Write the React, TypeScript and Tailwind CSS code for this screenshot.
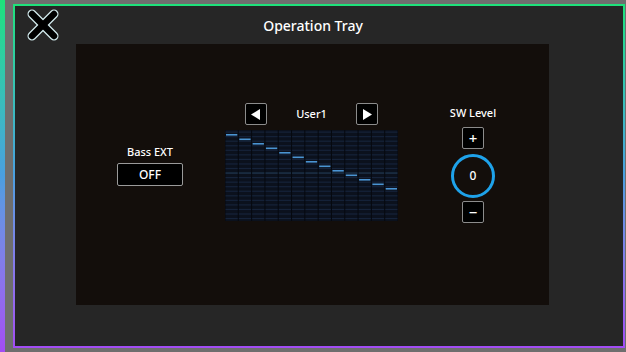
const ROWS = 20
const COLS = 13

function CloseIcon() {
	return (
		<svg width="32" height="32" viewBox="0 0 32 32">
			<line x1="5" y1="5" x2="27" y2="27" stroke="#d4ecef" strokeWidth="9" strokeLinecap="round" />
			<line x1="27" y1="5" x2="5" y2="27" stroke="#d4ecef" strokeWidth="9" strokeLinecap="round" />
			<line x1="5" y1="5" x2="27" y2="27" stroke="#000" strokeWidth="6.5" strokeLinecap="round" />
			<line x1="27" y1="5" x2="5" y2="27" stroke="#000" strokeWidth="6.5" strokeLinecap="round" />
		</svg>
	)
}

function EqGraph() {
	const w = 173
	const h = 91
	const cw = w / COLS
	const rh = h / ROWS
	return (
		<svg width={w} height={h} viewBox={`0 0 ${w} ${h}`} className="block">
			<rect width={w} height={h} fill="#0b111d" />
			{Array.from({ length: ROWS }).map((_, i) => (
				<rect key={'r' + i} x="0" y={i * rh + 1.5} width={w} height="1.2" fill={i === 9 ? '#223a52' : '#16233a'} />
			))}
			{Array.from({ length: COLS + 1 }).map((_, i) => (
				<rect key={'c' + i} x={i * cw - 0.5} y="0" width="1" height={h} fill="#06090f" />
			))}
			{Array.from({ length: COLS }).map((_, i) => (
				<rect key={'s' + i} x={i * cw + 1} y={4 + i * 4.5} width={cw - 2} height="1.6" fill="#4a94d2" />
			))}
		</svg>
	)
}

function SquareButton({ children }: { children: React.ReactNode }) {
	return (
		<div className="w-[22px] h-[22px] flex items-center justify-center bg-black border-[1.5px] border-[#8c8c8c] rounded-[2px] text-white">
			{children}
		</div>
	)
}

export default function App() {
	return (
		<div className="w-[626px] h-[352px] flex bg-[#6e6e6e] overflow-hidden" style={{ fontFamily: '"Noto Sans", "Open Sans", sans-serif' }}>
			<div className="w-[5px] h-full bg-linear-to-b from-[#1ee27a] via-[#4a9fe0] to-[#a24cf4]" />
			<div className="ml-[8px] mt-[4px] w-[612px] h-[344px] p-[2px] bg-linear-to-b from-[#1ee27a] via-[#4a9fe0] to-[#a24cf4]">
				<div className="w-full h-full bg-[#262626] flex flex-col">
					<div className="h-[38px] flex items-center">
						<div className="ml-[12px] w-[32px] h-[32px]">
							<CloseIcon />
						</div>
						<div className="flex-1 mr-[56px] text-center text-white text-[14px] font-medium">Operation Tray</div>
					</div>
					<div className="ml-[61px] w-[473px] h-[261px] bg-[#130e0b] flex items-start text-white text-[11px] font-medium">
						<div className="ml-[41px] mt-[101px] w-[66px] flex flex-col items-center">
							<div className="leading-[14px]">Bass EXT</div>
							<div className="mt-[4px] w-[66px] h-[23px] flex items-center justify-center bg-black border border-[#9a9a9a] rounded-[2px] text-[12px]">OFF</div>
						</div>
						<div className="ml-[42px] mt-[59px] w-[173px] flex flex-col">
							<div className="px-[20px] flex items-center justify-between">
								<SquareButton>
									<svg width="10" height="11" viewBox="0 0 10 11"><polygon points="9,0 9,11 0,5.5" fill="#fff" /></svg>
								</SquareButton>
								<div className="leading-[14px]">User1</div>
								<SquareButton>
									<svg width="10" height="11" viewBox="0 0 10 11"><polygon points="1,0 1,11 10,5.5" fill="#fff" /></svg>
								</SquareButton>
							</div>
							<div className="mt-[5px]">
								<EqGraph />
							</div>
						</div>
						<div className="ml-[45px] mt-[62px] w-[60px] flex flex-col items-center">
							<div className="leading-[14px]">SW Level</div>
							<div className="mt-[7px]">
								<SquareButton>
									<span className="text-[15px] leading-none">+</span>
								</SquareButton>
							</div>
							<div className="mt-[5px] w-[44px] h-[44px] rounded-full border-[3px] border-[#1ea2ea] flex items-center justify-center text-[12px]">0</div>
							<div className="mt-[3px]">
								<SquareButton>
									<span className="text-[15px] leading-none">−</span>
								</SquareButton>
							</div>
						</div>
					</div>
				</div>
			</div>
		</div>
	)
}
